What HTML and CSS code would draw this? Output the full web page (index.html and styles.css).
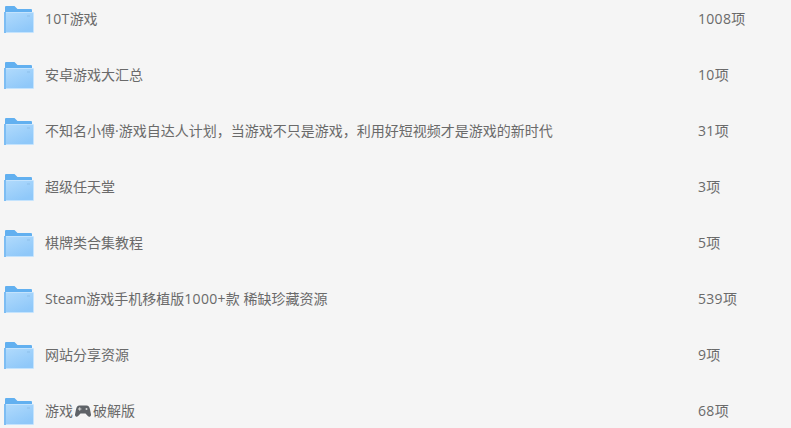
FILE: index.html
```html
<!DOCTYPE html>
<html lang="en">
<head>
    <meta charset="UTF-8">
    <title>文件列表</title>
    <link rel="stylesheet" href="styles.css">
</head>
<body>
    <svg class="defs" width="0" height="0" aria-hidden="true">
        <defs>
            <linearGradient id="folderFront" x1="0" y1="0" x2="0.6" y2="1">
                <stop offset="0" stop-color="#b0dafc"/>
                <stop offset="1" stop-color="#8fc8f9"/>
            </linearGradient>
            <symbol id="folder" viewBox="0 0 30 28">
                <path d="M1 2a1 1 0 0 1 1-1h8.500l3 3H27a1 1 0 0 1 1 1v4H1z" fill="#62b0f0"/>
                <rect x="0" y="7" width="30" height="21" rx="1" fill="#c4e3fd"/>
                <rect x="1" y="8" width="28" height="19" fill="url(#folderFront)"/>
                <rect x="0" y="7" width="2" height="21" fill="#7dbdf3"/>
                <rect x="23" y="10" width="3" height="2" fill="#96c8f2"/>
            </symbol>
        </defs>
    </svg>

    <ul class="file-list">
        <li class="file-row">
            <svg class="folder-icon"><use href="#folder"/></svg>
            <span class="file-name"><span class="num">10T</span>游戏</span>
            <span class="file-count"><span class="num">1008</span>项</span>
        </li>
        <li class="file-row">
            <svg class="folder-icon"><use href="#folder"/></svg>
            <span class="file-name">安卓游戏大汇总</span>
            <span class="file-count"><span class="num">10</span>项</span>
        </li>
        <li class="file-row">
            <svg class="folder-icon"><use href="#folder"/></svg>
            <span class="file-name">不知名小傅·游戏自达人计划，当游戏不只是游戏，利用好短视频才是游戏的新时代</span>
            <span class="file-count"><span class="num">31</span>项</span>
        </li>
        <li class="file-row">
            <svg class="folder-icon"><use href="#folder"/></svg>
            <span class="file-name">超级任天堂</span>
            <span class="file-count"><span class="num">3</span>项</span>
        </li>
        <li class="file-row">
            <svg class="folder-icon"><use href="#folder"/></svg>
            <span class="file-name">棋牌类合集教程</span>
            <span class="file-count"><span class="num">5</span>项</span>
        </li>
        <li class="file-row">
            <svg class="folder-icon"><use href="#folder"/></svg>
            <span class="file-name">Steam游戏手机移植版<span class="num">1000+</span>款 稀缺珍藏资源</span>
            <span class="file-count"><span class="num">539</span>项</span>
        </li>
        <li class="file-row">
            <svg class="folder-icon"><use href="#folder"/></svg>
            <span class="file-name">网站分享资源</span>
            <span class="file-count"><span class="num">9</span>项</span>
        </li>
        <li class="file-row">
            <svg class="folder-icon"><use href="#folder"/></svg>
            <span class="file-name">游戏<svg class="gamepad" viewBox="0 0 16 12"><path d="M4.500 0.500h7c2 0 3 1.500 3.500 4l1 5c0.300 1.800-1.800 3-3.200 1.500L10.500 8.500h-5L3.200 11C1.800 12.500-0.300 11.300 0 9.500l1-5c0.500-2.500 1.500-4 3.500-4z" fill="#5f6368"/><circle cx="11.500" cy="4" r="1" fill="#d8d8d8"/><rect x="3" y="3.500" width="3.400" height="1" fill="#d8d8d8"/><rect x="4.200" y="2.300" width="1" height="3.400" fill="#d8d8d8"/></svg>破解版</span>
            <span class="file-count"><span class="num">68</span>项</span>
        </li>
    </ul>
</body>
</html>
```

FILE: styles.css
```css
body {
    margin: 0;
    height: 428px;
    overflow: hidden;
    background: #f5f5f5;
    color: #6a6a6a;
    font-family: "Open Sans", "Noto Sans CJK SC", sans-serif;
    font-size: 14px;
}

.defs {
    display: block;
    height: 0;
}

.file-list {
    list-style: none;
    margin: -9px 0 0;
    padding: 0;
}

.file-row {
    display: flex;
    align-items: center;
    height: 56px;
    padding-left: 4px;
}

.folder-icon {
    flex: none;
    width: 30px;
    height: 28px;
    margin-right: 11px;
}

.file-name {
    display: block;
    width: 653px;
    flex: none;
    line-height: 20px;
    white-space: pre;
}

.file-count {
    line-height: 20px;
}

/* digits run a little wider in the original font */
.num {
    letter-spacing: 0.3px;
}

.gamepad {
    width: 16px;
    height: 12px;
    margin: 0 2px;
    vertical-align: -1px;
}
```
